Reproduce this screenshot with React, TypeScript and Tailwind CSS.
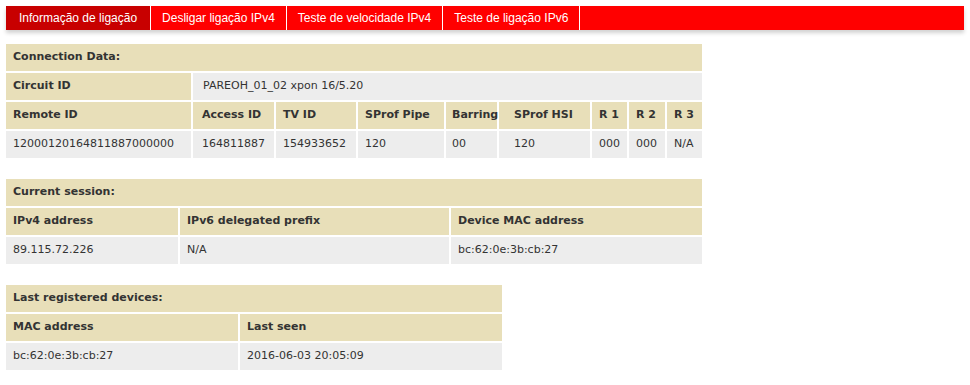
import React from 'react';

type Cell = { text: string; span?: string; pad?: string };

const tabs = [
  'Informação de ligação',
  'Desligar ligação IPv4',
  'Teste de velocidade IPv4',
  'Teste de ligação IPv6',
];

function Head({ text, span = '', pad = 'pl-[7px]' }: Cell) {
  return (
    <div
      className={`flex h-[27px] items-center bg-[#e8dfb9] font-bold text-[#333333] ${pad} ${span}`}
    >
      {text}
    </div>
  );
}

function Data({ text, span = '', pad = 'pl-[7px]' }: Cell) {
  return (
    <div className={`flex h-[27px] items-center bg-[#ededed] text-[#333333] ${pad} ${span}`}>
      {text}
    </div>
  );
}

function App() {
  return (
    <div className="h-[385px] w-[970px] bg-white pt-[6px] font-['DejaVu_Sans',Verdana,sans-serif] text-[11px]">
      {/* barra de separadores */}
      <div className="mx-[6px] flex h-[24px] bg-[#ff0000] font-['Liberation_Sans',Arial,sans-serif] text-[12px] text-white shadow-[0_3px_4px_rgba(0,0,0,0.18)]">
        {tabs.map((tab, i) => (
          <div
            key={tab}
            className={`flex items-center border-r border-white ${
              i === 0 ? 'bg-[#c80000] pl-[13px] pr-[13px]' : 'px-[11px]'
            }`}
          >
            {tab}
          </div>
        ))}
      </div>

      <div className="flex flex-col gap-[21px] px-[6px] pt-[14px]">
        {/* Connection Data */}
        <div className="grid w-[696px] grid-cols-[185px_81px_80px_86px_51px_91px_35px_36px_35px] gap-[2px]">
          <Head text="Connection Data:" span="col-span-9" />
          <Head text="Circuit ID" />
          <Data text="PAREOH_01_02 xpon 16/5.20" span="col-span-8" pad="pl-[10px]" />
          <Head text="Remote ID" />
          <Head text="Access ID" pad="pl-[9px]" />
          <Head text="TV ID" />
          <Head text="SProf Pipe" />
          <Head text="Barring" pad="pl-[6px]" />
          <Head text="SProf HSI" pad="pl-[15px]" />
          <Head text="R 1" />
          <Head text="R 2" />
          <Head text="R 3" />
          <Data text="12000120164811887000000" />
          <Data text="164811887" pad="pl-[9px]" />
          <Data text="154933652" />
          <Data text="120" />
          <Data text="00" pad="pl-[6px]" />
          <Data text="120" pad="pl-[15px]" />
          <Data text="000" />
          <Data text="000" />
          <Data text="N/A" />
        </div>

        {/* Current session */}
        <div className="grid w-[696px] grid-cols-[172px_269px_251px] gap-[2px]">
          <Head text="Current session:" span="col-span-3" />
          <Head text="IPv4 address" />
          <Head text="IPv6 delegated prefix" />
          <Head text="Device MAC address" />
          <Data text="89.115.72.226" />
          <Data text="N/A" />
          <Data text="bc:62:0e:3b:cb:27" />
        </div>

        {/* Last registered devices */}
        <div className="grid w-[496px] grid-cols-[232px_262px] gap-[2px]">
          <Head text="Last registered devices:" span="col-span-2" />
          <Head text="MAC address" />
          <Head text="Last seen" />
          <Data text="bc:62:0e:3b:cb:27" />
          <Data text="2016-06-03 20:05:09" />
        </div>
      </div>
    </div>
  );
}

export default App;
